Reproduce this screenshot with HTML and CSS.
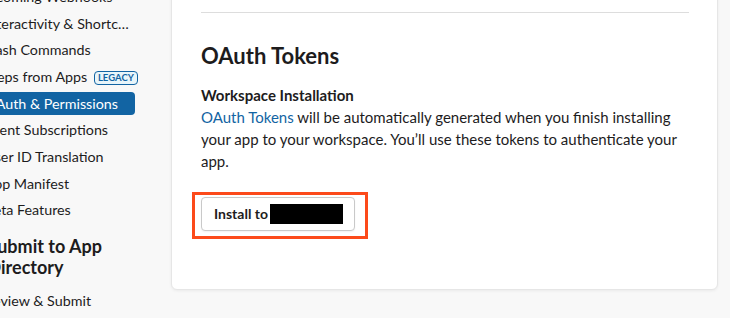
FILE: index.html
```html
<!DOCTYPE html>
<html lang="en">
<head>
<meta charset="utf-8">
<title>OAuth &amp; Permissions</title>
<link rel="stylesheet" href="styles.css">
</head>
<body>
<div class="page">
  <nav class="sidebar">
    <div class="sidebar-inner">
      <ul class="nav">
        <li class="nav-item">Incoming Webhooks</li>
        <li class="nav-item truncate">Interactivity &amp; Shortcuts</li>
        <li class="nav-item">Slash Commands</li>
        <li class="nav-item">Steps from Apps <span class="badge">LEGACY</span></li>
        <li class="nav-item active">OAuth &amp; Permissions</li>
        <li class="nav-item">Event Subscriptions</li>
        <li class="nav-item">User ID Translation</li>
        <li class="nav-item">App Manifest</li>
        <li class="nav-item">Beta Features</li>
      </ul>
      <h3 class="nav-heading">Submit to App Directory</h3>
      <ul class="nav nav-second">
        <li class="nav-item">Review &amp; Submit</li>
      </ul>
    </div>
  </nav>
  <main class="main">
    <section class="card">
      <div class="prev-section"></div>
      <h2 class="title">OAuth Tokens</h2>
      <h3 class="subtitle">Workspace Installation</h3>
      <p class="desc"><a class="link" href="#">OAuth Tokens</a> will be automatically generated when you finish installing your app to your workspace. You’ll use these tokens to authenticate your app.</p>
      <div class="highlight">
        <button class="btn" type="button"><span class="btn-label">Install to</span><span class="redact"></span></button>
      </div>
    </section>
  </main>
</div>
</body>
</html>
```

FILE: styles.css
```css
* { box-sizing: border-box; }
html, body {
  margin: 0;
  padding: 0;
  background: #f8f8f8;
  overflow: hidden;
}
body {
  font-family: Lato, "Open Sans", "Liberation Sans", sans-serif;
  color: #1d1c1d;
  width: 730px;
  height: 318px;
}
.page {
  display: flex;
  height: 318px;
}
.sidebar {
  width: 171px;
  flex: none;
  overflow: hidden;
}
.sidebar-inner {
  margin-top: -15.2px;
  margin-left: -23.5px;
  width: 190px;
}
.nav {
  list-style: none;
  margin: 0;
  padding: 0;
}
.nav-item {
  width: 158.5px;
  height: 23px;
  line-height: 23px;
  font-size: 14.3px;
  padding: 0 8px;
  margin-bottom: 3.7px;
  white-space: nowrap;
  border-radius: 4px;
  color: #1d1c1d;
}
.nav-item.truncate {
  overflow: hidden;
  text-overflow: ellipsis;
  padding-right: 5px;
}
.nav-item.active {
  background: #1264a3;
  color: #fff;
}
.badge {
  display: inline-block;
  margin-left: 3px;
  padding: 0 3px;
  height: 14px;
  line-height: 12px;
  font-size: 9.5px;
  font-weight: 700;
  color: #1264a3;
  background: #e8f5fa;
  border: 1px solid #1264a3;
  border-radius: 4px;
  vertical-align: 1px;
}
.nav-heading {
  margin: 15px 0 0 0;
  padding-left: 11px;
  width: 175px;
  font-size: 18px;
  line-height: 21px;
  font-weight: 700;
  color: #1d1c1d;
}
.nav-second {
  margin-top: 10.5px;
}
.main {
  flex: 1;
  padding-right: 12px;
}
.card {
  margin-top: -40px;
  background: #fff;
  border: 1px solid #e6e6e6;
  border-radius: 6px;
  box-shadow: 0 1px 3px rgba(0, 0, 0, 0.06);
  padding: 0 28px 50px 29px;
}
.prev-section {
  height: 52px;
  border-bottom: 1px solid #dddddd;
}
.title {
  margin: 28.5px 0 0 0;
  font-size: 22px;
  line-height: 28px;
  font-weight: 700;
  color: #1d1c1d;
}
.subtitle {
  margin: 14.7px 0 0 0;
  font-size: 15px;
  line-height: 22px;
  font-weight: 700;
  color: #1d1c1d;
}
.desc {
  margin: 0;
  font-size: 15px;
  line-height: 22px;
  color: #1d1c1d;
}
.link {
  color: #1264a3;
  text-decoration: none;
}
.highlight {
  width: fit-content;
  margin: 19.5px 0 0 -9px;
  border: 3px solid #fc4a1a;
  padding: 2px 10px 5px 6px;
}
.btn {
  display: flex;
  align-items: center;
  height: 34px;
  padding: 0 11px 0 12px;
  font-family: inherit;
  font-size: 14px;
  font-weight: 700;
  color: #1d1c1d;
  background: #fff;
  border: 1px solid #c9c9c9;
  border-radius: 4px;
  box-shadow: 0 1px 2px rgba(0, 0, 0, 0.06);
}
.btn-label {
  white-space: nowrap;
}
.redact {
  display: block;
  flex: none;
  width: 73px;
  height: 20px;
  background: #000;
  margin-left: 2px;
}
```
